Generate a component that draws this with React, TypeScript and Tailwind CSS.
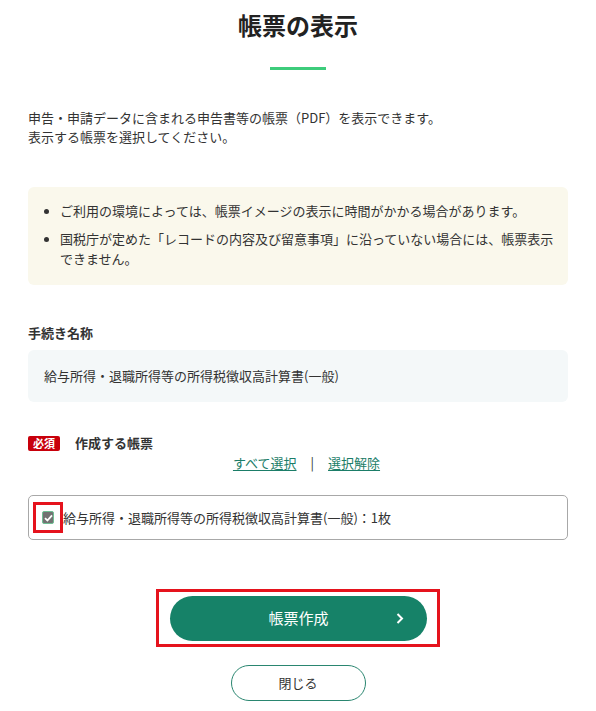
import React from 'react';

const font = { fontFamily: '"Noto Sans CJK JP", "Noto Sans", sans-serif' };

function Bullet({ children }: { children: React.ReactNode }) {
  return (
    <li className="flex">
      <span className="flex h-5 w-[18px] shrink-0 items-center">
        <span className="ml-[2px] block h-[5px] w-[5px] rounded-full bg-[#333]" />
      </span>
      <span>{children}</span>
    </li>
  );
}

export default function App() {
  return (
    <div className="min-h-screen bg-white text-[#333]" style={font}>
      <div className="px-[28px] pt-[9px] pb-4">
        <h1 className="text-center text-[24px] font-bold leading-8 text-[#222]">帳票の表示</h1>
        <div className="mx-auto mt-[26px] h-[3px] w-[56px] bg-[#3dcc7b]" />

        <p className="mt-[38px] text-[13px] leading-[19px]">
          申告・申請データに含まれる申告書等の帳票（PDF）を表示できます。
          <br />
          表示する帳票を選択してください。
        </p>

        <div className="mt-[41px] rounded-[6px] bg-[#faf8ec] pt-[14px] pb-4 pl-[14px] pr-2">
          <ul className="flex flex-col gap-2 text-[13px] leading-5">
            <Bullet>ご利用の環境によっては、帳票イメージの表示に時間がかかる場合があります。</Bullet>
            <Bullet>
              国税庁が定めた「レコードの内容及び留意事項」に沿っていない場合には、帳票表示
              <br />
              できません。
            </Bullet>
          </ul>
        </div>

        <h2 className="mt-[38px] text-[13px] font-bold leading-5">手続き名称</h2>
        <div className="mt-[7px] rounded-[6px] bg-[#f4f8f9] px-4 py-4 text-[13px] leading-5">
          給与所得・退職所得等の所得税徴収高計算書(一般)
        </div>

        <div className="mt-[31px] flex items-center gap-[15px]">
          <span className="flex h-[15px] w-[32px] items-center justify-center rounded-[2px] bg-[#c8000b] text-[11px] font-bold leading-none text-white">
            必須
          </span>
          <span className="text-[13px] font-bold leading-5">作成する帳票</span>
        </div>

        <div className="flex items-center justify-center gap-[14px] pl-[17px] text-[13px] leading-5">
          <a href="#" className="text-[#1b7d68] underline underline-offset-2">すべて選択</a>
          <span className="text-[#333]">|</span>
          <a href="#" className="text-[#1b7d68] underline underline-offset-2">選択解除</a>
        </div>

        <div className="mt-[22px] flex h-[45px] items-center rounded-[5px] border border-[#a8a8a8] pl-[4px]">
          <span className="flex h-[31px] w-[30px] items-center justify-center border-[3px] border-[#e5131d]">
            <span className="flex h-[13px] w-[12px] items-center justify-center rounded-[2px] border border-[#6fbf94] bg-[#727272]">
              <svg width="9" height="8" viewBox="0 0 9 8" fill="none">
                <polyline points="1,4.2 3.4,6.5 8,1.3" stroke="#fff" strokeWidth="1.8" />
              </svg>
            </span>
          </span>
          <span className="text-[13px] leading-5">給与所得・退職所得等の所得税徴収高計算書(一般)：1枚</span>
        </div>

        <div className="mt-[49px] flex justify-center">
          <div className="border-[3px] border-[#e5131d] pt-[4px] pb-[3px] pl-[11px] pr-[10px]">
            <button className="relative flex h-[45px] w-[257px] items-center justify-center rounded-full bg-[#168268] text-[15px] font-normal text-white">
              帳票作成
              <svg className="absolute right-[23px] top-[17px]" width="8" height="11" viewBox="0 0 8 11" fill="none">
                <polyline points="1.5,1 6,5.5 1.5,10" stroke="#fff" strokeWidth="2" />
              </svg>
            </button>
          </div>
        </div>

        <div className="mt-[18px] flex justify-center">
          <button className="h-[36px] w-[135px] rounded-full border border-[#2a8670] bg-white text-[13px] text-[#333]">
            閉じる
          </button>
        </div>
      </div>
    </div>
  );
}
